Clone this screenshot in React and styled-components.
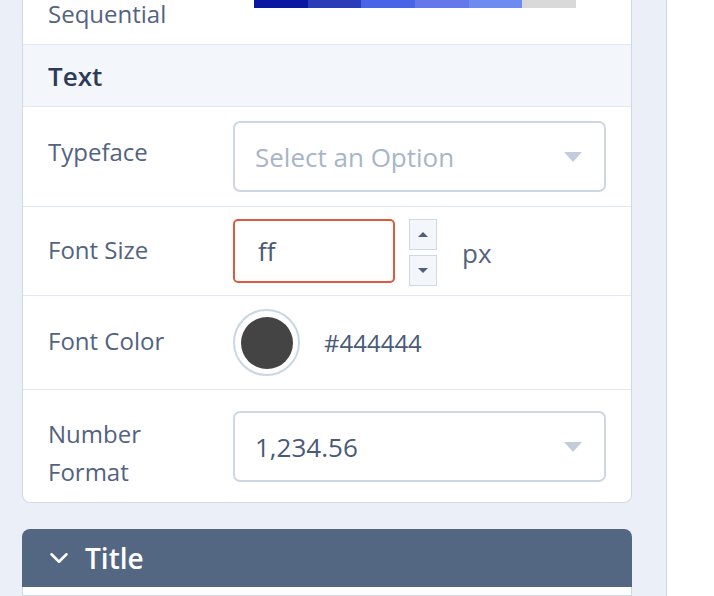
import styled, { createGlobalStyle } from "styled-components"
import { ChevronDown } from "lucide-react"

const GlobalStyle = createGlobalStyle`
    body {
        margin: 0;
        background: #ffffff;
        font-family: "Open Sans", "Noto Sans", sans-serif;
    }
`;

const Page = styled.div`
    display: flex;
    height: 596px;
    overflow: hidden;
`;

const Sidebar = styled.div`
    width: 667px;
    box-sizing: border-box;
    padding: 0 34px 0 22px;
    background: #ebf0f8;
    border-right: 1px solid #cfd8e6;
    display: flex;
    flex-direction: column;
`;

const Panel = styled.div`
    background: #ffffff;
    border: 1px solid #cfd9e6;
    border-top: none;
    border-radius: 0 0 8px 8px;
`;

const Row = styled.div`
    display: grid;
    grid-template-columns: 185px 1fr;
    align-items: center;
    padding: ${p => p.$pad || "14px"} 25px;
    border-bottom: ${p => (p.$last ? "none" : "1px solid #e1e8f1")};
`;

const TopRow = styled.div`
    display: grid;
    grid-template-columns: 185px 1fr;
    height: 44px;
    padding: 0 25px;
    border-bottom: 1px solid #e1e8f1;
`;

const Label = styled.div`
    align-self: start;
    margin-top: ${p => p.$offset ?? 12}px;
    margin-bottom: ${p => p.$under ?? 0}px;
    font-size: 24px;
    line-height: 38px;
    color: #53637f;
`;

const SeqLabel = styled.div`
    align-self: end;
    padding-bottom: 18px;
    font-size: 24px;
    line-height: 24px;
    color: #53637f;
`;

const ColorBar = styled.div`
    display: flex;
    width: 322px;
    height: 8px;
    margin-left: 21px;
`;

const Swatch = styled.div`
    flex: 1;
    background: ${p => p.$c};
`;

const SectionHeader = styled.div`
    height: 61px;
    display: flex;
    align-items: center;
    padding: 0 25px;
    background: #f3f6fb;
    border-bottom: 1px solid #e1e8f1;
    font-size: 26px;
    font-weight: 600;
    color: #2c3b58;
`;

const Select = styled.div`
    height: 71px;
    box-sizing: border-box;
    border: 2px solid #cdd7e4;
    border-radius: 7px;
    display: flex;
    align-items: center;
    justify-content: space-between;
    padding: 0 22px 0 20px;
    font-size: 26px;
    color: ${p => (p.$placeholder ? "#a8b5c8" : "#4a5a78")};
`;

const Caret = styled.span`
    width: 0;
    height: 0;
    border-left: 9px solid transparent;
    border-right: 9px solid transparent;
    border-top: 10px solid #c3ccda;
`;

const Controls = styled.div`
    display: flex;
    align-items: ${p => p.$top ? "flex-start" : "center"};
`;

const Input = styled.div`
    width: 162px;
    height: 64px;
    box-sizing: border-box;
    border: 2px solid #dd5a3c;
    border-radius: 5px;
    display: flex;
    align-items: center;
    padding-left: 23px;
    font-size: 26px;
    color: #4a5a78;
`;

const Spinner = styled.div`
    display: flex;
    flex-direction: column;
    gap: 5px;
    margin-left: 14px;
`;

const SpinButton = styled.div`
    width: 28px;
    height: 31px;
    box-sizing: border-box;
    border: 1px solid #cfd9e6;
    background: #f3f6fb;
    display: flex;
    align-items: center;
    justify-content: center;
    &::after {
        content: "";
        border-left: 5px solid transparent;
        border-right: 5px solid transparent;
        ${p => (p.$up ? "border-bottom" : "border-top")}: 5px solid #4f5f7c;
    }
`;

const Unit = styled.span`
    align-self: center;
    margin-left: 25px;
    font-size: 26px;
    color: #53637f;
`;

const ColorRing = styled.div`
    width: 67px;
    height: 67px;
    box-sizing: border-box;
    border: 2px solid #cbd6e4;
    border-radius: 50%;
    display: flex;
    align-items: center;
    justify-content: center;
`;

const ColorDot = styled.div`
    width: 52px;
    height: 52px;
    border-radius: 50%;
    background: ${p => p.$c};
`;

const HexText = styled.span`
    margin-left: 24px;
    font-size: 24px;
    font-weight: 500;
    color: #4a5a78;
`;

const AccordionHeader = styled.div`
    margin-top: 26px;
    height: 58px;
    display: flex;
    align-items: center;
    gap: 11px;
    padding: 0 22px;
    background: #536783;
    border-radius: 8px 8px 0 0;
    color: #ffffff;
    font-size: 28px;
    font-weight: 600;
`;

const AccordionBody = styled.div`
    flex: 1;
    background: #ffffff;
    border: 1px solid #cfd9e6;
    border-top: none;
`;

const scale = ["#0a17a0", "#2a3cb8", "#4a64e8", "#6478ec", "#6e8cf0", "#d9d9d9"]

const App = () => {
    return (
        <Page>
            <GlobalStyle />
            <Sidebar>
                <Panel>
                    <TopRow>
                        <SeqLabel>Sequential</SeqLabel>
                        <ColorBar>
                            {scale.map(c => <Swatch key={c} $c={c} />)}
                        </ColorBar>
                    </TopRow>
                    <SectionHeader>Text</SectionHeader>
                    <Row $pad="14px">
                        <Label $offset={12}>Typeface</Label>
                        <Select $placeholder>
                            Select an Option
                            <Caret />
                        </Select>
                    </Row>
                    <Row $pad="12px 25px 9px">
                        <Label $offset={12}>Font Size</Label>
                        <Controls $top>
                            <Input>ff</Input>
                            <Spinner>
                                <SpinButton $up />
                                <SpinButton />
                            </Spinner>
                            <Unit>px</Unit>
                        </Controls>
                    </Row>
                    <Row $pad="13px">
                        <Label $offset={13}>Font Color</Label>
                        <Controls>
                            <ColorRing>
                                <ColorDot $c="#444444" />
                            </ColorRing>
                            <HexText>#444444</HexText>
                        </Controls>
                    </Row>
                    <Row $pad="21px 25px 20px" $last>
                        <Label $offset={4} $under={-9}>Number<br />Format</Label>
                        <Select>
                            1,234.56
                            <Caret />
                        </Select>
                    </Row>
                </Panel>
                <AccordionHeader>
                    <ChevronDown size={30} strokeWidth={2} />
                    Title
                </AccordionHeader>
                <AccordionBody />
            </Sidebar>
        </Page>
    )
}

export default App
